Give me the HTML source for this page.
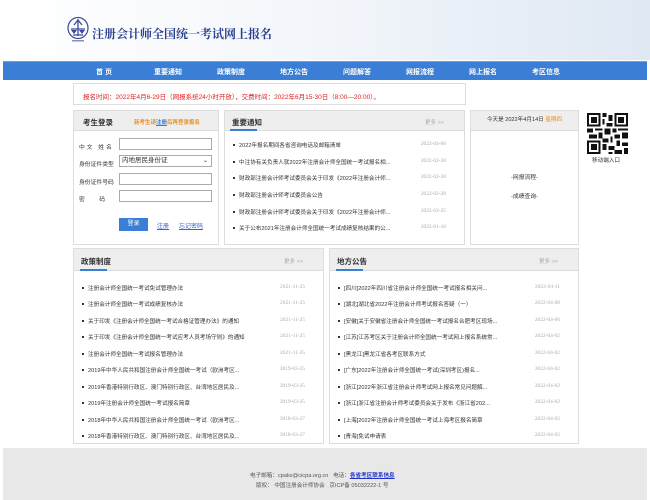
<!DOCTYPE html>
<html><head><meta charset="utf-8"><style>
*{margin:0;padding:0;box-sizing:border-box}
body{width:650px;height:500px;overflow:hidden;background:#fff;font-family:"Liberation Sans","Noto Sans CJK SC",sans-serif;font-size:6px;color:#333;position:relative}
.a{position:absolute}
.hdr{left:0;top:0;width:650px;height:60px;background:linear-gradient(90deg,#fff 0%,#f4f7fb 45%,#dfe8f3 100%)}
.nav{left:3px;top:61px;width:644px;height:19px;background:#3a7fd5;border-top:1px solid #6fa1e0}
.nav span{position:absolute;top:5px;color:#fff;font-size:7px;font-weight:bold;transform:translateX(-50%)}
.panel{border:1px solid #ddd;background:#fff}
.ph{height:20px;background:#eee;border-bottom:1px solid #ddd;position:relative}
.ph b{position:absolute;left:7px;top:6px;font-size:7.5px;color:#333}
.ph i{position:absolute;left:5px;bottom:-1px;width:27px;height:2px;background:#3a7fd5}
.ph em{position:absolute;right:20px;top:7px;font-style:normal;color:#aaa;font-size:5.5px}
.li{position:absolute;left:8px;font-size:5.6px;color:#333;white-space:nowrap}
.li:before{content:"";display:inline-block;width:2px;height:2px;background:#333;margin-right:4px;vertical-align:1px}
.dt{position:absolute;right:18px;font-size:5.4px;color:#aaa;font-family:"Liberation Serif",serif}
.lab{position:absolute;left:5px;font-size:5.8px;color:#333}
.inp{position:absolute;left:45px;width:93px;height:12px;border:1px solid #aaa;background:#fff}
</style></head><body>
<div class="a hdr"></div>
<svg class="a" style="left:66px;top:16px" width="24" height="28" viewBox="0 0 24 28"><ellipse cx="12" cy="12" rx="10" ry="10.5" fill="none" stroke="#3b4a9a" stroke-width="1.2"/><path d="M12 3 L12 20 M7 19 L17 19 M5 13 L19 13 M8 9 L12 4 L16 9" stroke="#3b4a9a" stroke-width="1.3" fill="none"/><path d="M5 14 L8 18 L11 14Z M13 14 L16 18 L19 14Z" fill="#3b4a9a"/><rect x="6" y="24" width="12" height="1.5" fill="#8a8fb8"/></svg>
<div class="a" style="left:92px;top:25px;font-size:12px;font-weight:bold;color:#2a3f8f;font-family:'Noto Serif CJK SC',serif">注册会计师全国统一考试网上报名</div>
<div class="a nav"><span style="left:101px">首 页</span><span style="left:165px">重要通知</span><span style="left:228px">政策制度</span><span style="left:291px">地方公告</span><span style="left:354px">问题解答</span><span style="left:417px">网报流程</span><span style="left:480px">网上报名</span><span style="left:543px">考区信息</span></div>
<div class="a" style="left:73px;top:83px;width:393px;height:22px;border:1px solid #ddd"></div>
<div class="a" style="left:83px;top:91px;font-size:6.5px;color:#e02020">报名时间：2022年4月6-29日（网报系统24小时开放），交费时间：2022年6月15-30日（8:00—20:00）。</div>

<div class="a panel" style="left:73px;top:110px;width:146px;height:135px">
<div class="ph"><b style="left:9px">考生登录</b><span class="a" style="left:60px;top:7px;font-size:5.5px;color:#f08c1e;font-weight:bold">新考生请<u style="color:#3a7fd5">注册</u>后再登录报名</span></div>
<div class="lab" style="top:31px;letter-spacing:2px">中文 姓名</div><div class="inp" style="top:27px"></div>
<div class="lab" style="top:48px">身份证件类型</div><div class="inp" style="top:44px;font-size:6.5px;padding-left:2px;line-height:10px">内地居民身份证<span style="position:absolute;right:3px;font-size:6px">⌄</span></div>
<div class="lab" style="top:66px">身份证件号码</div><div class="inp" style="top:62px"></div>
<div class="lab" style="top:83px">密&nbsp;&nbsp;&nbsp;&nbsp;&nbsp;&nbsp;&nbsp;&nbsp;&nbsp;码</div><div class="inp" style="top:79px"></div>
<div class="a" style="left:45px;top:107px;width:29px;height:13px;background:#3a7fd5;color:#fff;font-size:6px;text-align:center;line-height:13px">登录</div>
<u class="a" style="left:83px;top:110px;color:#3366cc;font-size:6px">注册</u>
<u class="a" style="left:105px;top:110px;color:#3366cc;font-size:6px">忘记密码</u>
</div>

<div class="a panel" style="left:224px;top:110px;width:241px;height:135px">
<div class="ph"><b>重要通知</b><i></i><em>更多 >></em></div>
<div class="li" style="top:30px">2022年报名期间各省咨询电话及邮箱清单</div><div class="dt" style="top:30px">2022-04-06</div>
<div class="li" style="top:47px">中注协有关负责人就2022年注册会计师全国统一考试报名相...</div><div class="dt" style="top:47px">2022-02-28</div>
<div class="li" style="top:63px">财政部注册会计师考试委员会关于印发《2022年注册会计师...</div><div class="dt" style="top:63px">2022-02-28</div>
<div class="li" style="top:80px">财政部注册会计师考试委员会公告</div><div class="dt" style="top:80px">2022-02-28</div>
<div class="li" style="top:97px">财政部注册会计师考试委员会关于印发《2022年注册会计师...</div><div class="dt" style="top:97px">2022-02-25</div>
<div class="li" style="top:113px">关于公布2021年注册会计师全国统一考试成绩复核结果的公...</div><div class="dt" style="top:113px">2022-01-18</div>
</div>

<div class="a panel" style="left:470px;top:110px;width:109px;height:135px">
<div class="ph" style="text-align:center;font-size:5.6px;line-height:19px">今天是 2022年4月14日 <span style="color:#f08c1e">星期四</span></div>
<div class="a" style="left:0;width:107px;top:61px;text-align:center;font-size:5.8px">-网报流程-</div>
<div class="a" style="left:0;width:107px;top:80px;text-align:center;font-size:5.8px">-成绩查询-</div>
</div>
<svg class="a" style="left:587px;top:113px" width="41" height="41" viewBox="0 0 21 21" shape-rendering="crispEdges"><rect width="21" height="21" fill="#fff"/><g fill="#111"><path d="M0 0h7v7H0zM14 0h7v7h-7zM0 14h7v7H0z"/></g><g fill="#fff"><path d="M1 1h5v5H1zM15 1h5v5h-5zM1 15h5v5H1z"/></g><g fill="#111"><path d="M2 2h3v3H2zM16 2h3v3h-3zM2 16h3v3H2zM8 0h2v2H8zM11 1h2v3h-2zM8 3h1v3H8zM10 5h3v2h-3zM0 8h3v2H0zM4 8h4v1H4zM9 8h3v3H9zM13 8h2v2h-2zM16 8h5v1h-5zM1 11h4v2H1zM6 10h2v3H6zM14 11h3v2h-3zM18 10h3v3h-3zM8 13h3v2H8zM12 12h1v3h-1zM8 16h2v3H8zM11 17h3v2h-3zM15 14h2v3h-2zM18 15h3v2h-3zM14 19h4v2h-4zM19 18h2v3h-2zM11 20h2v1h-2z"/></g></svg>
<div class="a" style="left:592px;top:156px;font-size:5.6px">移动端入口</div>

<div class="a panel" style="left:73px;top:248px;width:251px;height:196px">
<div class="ph" style="height:22px"><b style="top:7px">政策制度</b><i style="left:6px"></i><em style="top:8px">更多 >></em></div>
<div class="li" style="top:35px">注册会计师全国统一考试免试管理办法</div><div class="dt" style="top:35px">2021-11-25</div>
<div class="li" style="top:51px">注册会计师全国统一考试成绩复核办法</div><div class="dt" style="top:51px">2021-11-25</div>
<div class="li" style="top:68px">关于印发《注册会计师全国统一考试合格证管理办法》的通知</div><div class="dt" style="top:68px">2021-11-25</div>
<div class="li" style="top:84px">关于印发《注册会计师全国统一考试应考人员考场守则》的通知</div><div class="dt" style="top:84px">2021-11-25</div>
<div class="li" style="top:101px">注册会计师全国统一考试报名管理办法</div><div class="dt" style="top:101px">2021-11-25</div>
<div class="li" style="top:117px">2019年中华人民共和国注册会计师全国统一考试（欧洲考区...</div><div class="dt" style="top:117px">2019-03-25</div>
<div class="li" style="top:134px">2019年香港特别行政区、澳门特别行政区、台湾地区居民及...</div><div class="dt" style="top:134px">2019-03-25</div>
<div class="li" style="top:150px">2019年注册会计师全国统一考试报名简章</div><div class="dt" style="top:150px">2019-03-25</div>
<div class="li" style="top:167px">2018年中华人民共和国注册会计师全国统一考试（欧洲考区...</div><div class="dt" style="top:167px">2018-03-27</div>
<div class="li" style="top:183px">2018年香港特别行政区、澳门特别行政区、台湾地区居民及...</div><div class="dt" style="top:183px">2018-03-27</div>
</div>

<div class="a panel" style="left:329px;top:248px;width:250px;height:196px">
<div class="ph" style="height:22px"><b style="top:7px">地方公告</b><i style="left:6px"></i><em style="top:8px">更多 >></em></div>
<div class="li" style="top:35px">[四川]2022年四川省注册会计师全国统一考试报名相关问...</div><div class="dt" style="top:35px">2022-04-11</div>
<div class="li" style="top:51px">[湖北]湖北省2022年注册会计师考试报名答疑（一）</div><div class="dt" style="top:51px">2022-04-08</div>
<div class="li" style="top:68px">[安徽]关于安徽省注册会计师全国统一考试报名合肥考区现场...</div><div class="dt" style="top:68px">2022-04-06</div>
<div class="li" style="top:84px">[江苏]江苏考区关于注册会计师全国统一考试网上报名系统常...</div><div class="dt" style="top:84px">2022-04-02</div>
<div class="li" style="top:101px">[黑龙江]黑龙江省各考区联系方式</div><div class="dt" style="top:101px">2022-04-02</div>
<div class="li" style="top:117px">[广东]2022年注册会计师全国统一考试(深圳考区)报名...</div><div class="dt" style="top:117px">2022-04-02</div>
<div class="li" style="top:134px">[浙江]2022年浙江省注册会计师考试网上报名常见问题解...</div><div class="dt" style="top:134px">2022-04-02</div>
<div class="li" style="top:150px">[浙江]浙江省注册会计师考试委员会关于发布《浙江省202...</div><div class="dt" style="top:150px">2022-04-02</div>
<div class="li" style="top:167px">[上海]2022年注册会计师全国统一考试上海考区报名简章</div><div class="dt" style="top:167px">2022-04-02</div>
<div class="li" style="top:183px">[青海]免试申请表</div><div class="dt" style="top:183px">2022-04-02</div>
</div>

<div class="a" style="left:3px;top:448px;width:644px;height:52px;background:#e8e8e8"></div>
<div class="a" style="left:250px;top:471px;font-size:5.6px;color:#555">电子邮箱：cpaks@cicpa.org.cn&nbsp;&nbsp;&nbsp;电话：<u style="color:#2233cc;font-weight:bold">各省考区联系信息</u></div>
<div class="a" style="left:256px;top:481px;font-size:5.6px;color:#555">版权：&nbsp;中国注册会计师协会&nbsp;&nbsp;&nbsp;京ICP备 05032222-1 号</div>
</body></html>
